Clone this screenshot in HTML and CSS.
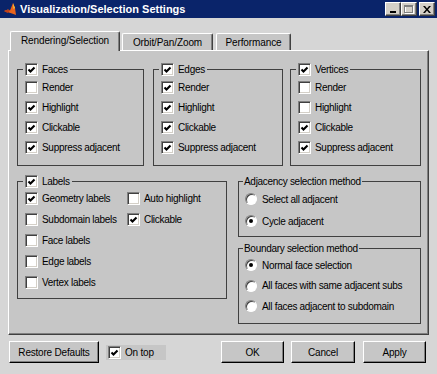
FILE: index.html
```html
<!DOCTYPE html>
<html>
<head>
<meta charset="utf-8">
<link rel="stylesheet" href="styles.css">
</head>
<body>
<svg class="defs" width="0" height="0">
  <symbol id="chk" viewBox="1 1 11 11"><path d="M3.5 6.5l2 2 4-4" fill="none" stroke="#000" stroke-width="2.1"/></symbol>
</svg>
<div class="window">
  <div class="titlebar">
    <svg class="appicon" width="14" height="14" viewBox="0 0 14 14">
      <path d="M1 9 L5 7.5 L7 8.5 L10 1 L12 6 L13 13 L9 11.5 Z" fill="#e8631c"/>
      <path d="M10 1 L12 6 L10.5 7 Z" fill="#f7c63b"/>
      <path d="M1 9 L5 7.5 L7 8.5 L4.5 11 Z" fill="#c0401a"/>
    </svg>
    <span class="title">Visualization/Selection Settings</span>
    <div class="winbtns">
      <span class="wbtn"><svg width="8" height="8" viewBox="0 0 8 8"><rect x="1" y="6" width="6" height="2" fill="#000"/></svg></span>
      <span class="wbtn"><svg width="10" height="9" viewBox="0 0 10 9"><rect x="1.5" y="1.5" width="8" height="7" fill="none" stroke="#fff"/><rect x="0.5" y="0.5" width="8" height="7" fill="none" stroke="#808080"/><rect x="0" y="1" width="9" height="1" fill="#808080"/></svg></span>
      <span class="wbtn close"><svg width="8" height="7" viewBox="0 0 8 7"><path d="M0 0h2l2 2.4 2-2.4h2l-3 3.5 3 3.5h-2l-2-2.4-2 2.4h-2l3-3.5z" fill="#000"/></svg></span>
    </div>
  </div>
  <div class="main">
    <div class="tabs">
      <div class="tab active t1">Rendering/Selection</div>
      <div class="tab t2">Orbit/Pan/Zoom</div>
      <div class="tab t3">Performance</div>
    </div>
    <div class="panel">
      <div class="row1">
        <fieldset class="group">
          <legend><span class="cb"><svg width="11" height="11"><use href="#chk"/></svg></span>Faces</legend>
          <div class="item"><span class="cb"></span>Render</div>
          <div class="item"><span class="cb"><svg width="11" height="11"><use href="#chk"/></svg></span>Highlight</div>
          <div class="item"><span class="cb"><svg width="11" height="11"><use href="#chk"/></svg></span>Clickable</div>
          <div class="item"><span class="cb"><svg width="11" height="11"><use href="#chk"/></svg></span>Suppress adjacent</div>
        </fieldset>
        <fieldset class="group">
          <legend><span class="cb"><svg width="11" height="11"><use href="#chk"/></svg></span>Edges</legend>
          <div class="item"><span class="cb"><svg width="11" height="11"><use href="#chk"/></svg></span>Render</div>
          <div class="item"><span class="cb"><svg width="11" height="11"><use href="#chk"/></svg></span>Highlight</div>
          <div class="item"><span class="cb"><svg width="11" height="11"><use href="#chk"/></svg></span>Clickable</div>
          <div class="item"><span class="cb"><svg width="11" height="11"><use href="#chk"/></svg></span>Suppress adjacent</div>
        </fieldset>
        <fieldset class="group">
          <legend><span class="cb"><svg width="11" height="11"><use href="#chk"/></svg></span>Vertices</legend>
          <div class="item"><span class="cb"></span>Render</div>
          <div class="item"><span class="cb"></span>Highlight</div>
          <div class="item"><span class="cb"><svg width="11" height="11"><use href="#chk"/></svg></span>Clickable</div>
          <div class="item"><span class="cb"><svg width="11" height="11"><use href="#chk"/></svg></span>Suppress adjacent</div>
        </fieldset>
      </div>
      <div class="row2">
        <fieldset class="group labels">
          <legend><span class="cb"><svg width="11" height="11"><use href="#chk"/></svg></span>Labels</legend>
          <div class="lgrid">
            <div class="item"><span class="cb"><svg width="11" height="11"><use href="#chk"/></svg></span>Geometry labels</div>
            <div class="item"><span class="cb"></span>Auto highlight</div>
            <div class="item"><span class="cb"></span>Subdomain labels</div>
            <div class="item"><span class="cb"><svg width="11" height="11"><use href="#chk"/></svg></span>Clickable</div>
            <div class="item"><span class="cb"></span>Face labels</div>
            <div></div>
            <div class="item"><span class="cb"></span>Edge labels</div>
            <div></div>
            <div class="item"><span class="cb"></span>Vertex labels</div>
          </div>
        </fieldset>
        <div class="rightcol">
          <fieldset class="group adj">
            <legend class="tlegend">Adjacency selection method</legend>
            <div class="ritem"><span class="rb"></span>Select all adjacent</div>
            <div class="ritem"><span class="rb on"></span>Cycle adjacent</div>
          </fieldset>
          <fieldset class="group bnd">
            <legend class="tlegend">Boundary selection method</legend>
            <div class="ritem"><span class="rb on"></span>Normal face selection</div>
            <div class="ritem"><span class="rb"></span>All faces with same adjacent subs</div>
            <div class="ritem"><span class="rb"></span>All faces adjacent to subdomain</div>
          </fieldset>
        </div>
      </div>
    </div>
    <div class="footer">
      <div class="btn restore">Restore Defaults</div>
      <div class="ontop"><span class="cb"><svg width="11" height="11"><use href="#chk"/></svg></span>On top</div>
      <div class="spacer"></div>
      <div class="btn ok">OK</div>
      <div class="btn cancel">Cancel</div>
      <div class="btn apply">Apply</div>
    </div>
  </div>
</div>
</body>
</html>
```
FILE: styles.css
```css
* { box-sizing: border-box; }
body {
  margin: 0;
  font-family: "Liberation Sans", Arial, sans-serif;
  font-size: 10px;
  color: #000;
  background: #d6d6d6;
}
.defs { position: absolute; width: 0; height: 0; }
.window {
  width: 437px;
  height: 374px;
  background: #d6d6d6;
  display: flex;
  flex-direction: column;
}
.titlebar {
  height: 18px;
  background: #0a246a;
  display: flex;
  align-items: center;
  padding: 0 2px 0 3px;
  color: #fff;
  font-weight: bold;
  font-size: 11px;
}
.appicon { margin-right: 3px; flex: none; }
.title { flex: 1; }
.winbtns { display: flex; }
.wbtn {
  width: 16px;
  height: 14px;
  background: #d4d0c8;
  border: 1px solid;
  border-color: #fff #404040 #404040 #fff;
  box-shadow: inset -1px -1px #808080;
  display: flex;
  align-items: center;
  justify-content: center;
}
.wbtn.close { margin-left: 2px; }

.main {
  flex: 1;
  padding: 13px 8px 0 8px;
  display: flex;
  flex-direction: column;
}
.tabs {
  display: flex;
  align-items: flex-end;
  height: 19px;
  padding-left: 2px;
  position: relative;
  z-index: 1;
  letter-spacing: -0.1px;
}
.tab {
  height: 17px;
  background: #c6c6c6;
  border: 1px solid;
  border-bottom: none;
  border-color: #fff #404040 #404040 #fff;
  box-shadow: inset -1px 0 #808080;
  border-radius: 2px 2px 0 0;
  text-align: center;
  line-height: 17px;
}
.tab.active {
  height: 20px;
  margin-bottom: -1px;
  line-height: 18px;
}
.t1 { width: 110px; }
.t2 { width: 91px; margin-left: 2px; }
.t3 { width: 75px; margin-left: 3px; }

.panel {
  height: 285px;
  background: #c6c6c6;
  border: 1px solid;
  border-color: #fff #404040 #404040 #fff;
  box-shadow: inset -1px -1px #808080;
  padding: 12px 7px 0 8px;
  letter-spacing: -0.3px;
}
.row1 {
  display: grid;
  grid-template-columns: 128px 129px 131px;
  column-gap: 8px;
}
.row1 .group:first-child { margin-right: 1px; }
.row1 .group:nth-child(2) { margin-right: -1px; }
.group {
  margin: 0;
  min-width: 0;
  border: 1px solid #404040;
  padding: 1px 6px 8px 7px;
}
.group legend {
  padding: 0 2px;
  margin-left: -2px;
  height: 13px;
  line-height: 13px;
  display: flex;
  align-items: center;
}
.group legend.tlegend {
  padding: 0 1px;
  margin-left: -2px;
}
.item {
  height: 20px;
  display: flex;
  align-items: center;
  white-space: nowrap;
}
.cb {
  width: 13px;
  height: 13px;
  flex: none;
  background: #fff;
  border: 1px solid;
  border-color: #808080 #fff #fff #808080;
  box-shadow: inset 1px 1px #404040, inset -1px -1px #d4d0c8;
  margin-right: 4px;
  display: flex;
}
.cb svg { display: block; }

.row2 {
  margin-top: 9px;
  display: grid;
  grid-template-columns: 210px 183px;
  column-gap: 11px;
  align-items: start;
}
.labels { padding: 0 6px 5px 7px; }
.lgrid {
  display: grid;
  grid-template-columns: 102px auto;
  grid-auto-rows: 21px;
}
.lgrid .item { height: 21px; }
.rightcol {
  display: flex;
  flex-direction: column;
  gap: 5px;
}
.adj { padding: 0 4px 4px 6px; }
.adj .ritem { height: 22px; }
.bnd { padding: 0 4px 6px 6px; }
.bnd .ritem { height: 20.5px; }
.ritem {
  display: flex;
  align-items: center;
  white-space: nowrap;
}
.rb {
  width: 12px;
  height: 12px;
  flex: none;
  border-radius: 50%;
  background: #fff;
  border: 1px solid;
  border-color: #808080 #fff #fff #808080;
  box-shadow: inset 1px 1px 0 #404040;
  margin-right: 5px;
  display: flex;
  align-items: center;
  justify-content: center;
}
.rb.on::after {
  content: "";
  width: 4px;
  height: 4px;
  border-radius: 50%;
  background: #000;
}

.footer {
  margin-top: 6px;
  height: 22px;
  display: flex;
  align-items: center;
  padding-left: 1px;
  padding-right: 3px;
  letter-spacing: -0.2px;
}
.btn {
  height: 22px;
  background: #c6c6c6;
  border: 1px solid;
  border-color: #fff #000 #000 #fff;
  box-shadow: inset -1px -1px #808080;
  display: flex;
  align-items: center;
  justify-content: center;
}
.restore { width: 90px; }
.ontop {
  margin-left: 7px;
  width: 60px;
  height: 15px;
  background: #c6c6c6;
  display: flex;
  align-items: center;
  padding-left: 2px;
}
.spacer { flex: 1; }
.ok { width: 63px; }
.cancel { width: 64px; margin-left: 7px; }
.apply { width: 63px; margin-left: 8px; }
```
